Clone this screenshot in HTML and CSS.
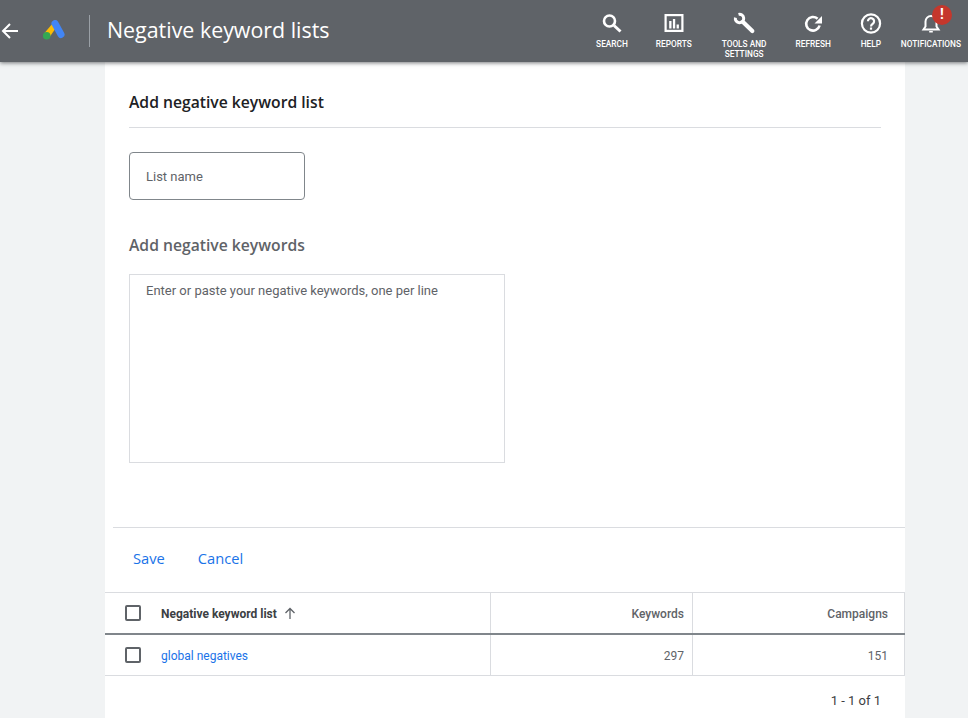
FILE: index.html
```html
<!DOCTYPE html>
<html lang="en">
<head>
  <meta charset="UTF-8">
  <title>Negative keyword lists</title>
  <link rel="stylesheet" href="styles.css">
</head>
<body>

  <header class="topbar">
    <svg class="back" width="20" height="20" viewBox="0 0 20 20"><path d="M18 10H3M10 3l-7 7 7 7" fill="none" stroke="#fff" stroke-width="2"/></svg>
    <svg class="logo" width="24" height="22" viewBox="0 0 24 22">
      <path d="M11 3 2.500 13 8 16.500 14.500 7z" fill="#fbbc04"/>
      <path d="M13 3.500 19 14.500" fill="none" stroke="#4285f4" stroke-width="7" stroke-linecap="round"/>
      <circle cx="4.700" cy="15.700" r="3.800" fill="#34a853"/>
    </svg>
    <div class="divider"></div>
    <h1>Negative keyword lists</h1>

    <nav class="actions">
      <div class="action search">
        <svg width="24" height="24" viewBox="0 0 24 24"><circle cx="9.500" cy="10" r="5.500" fill="none" stroke="#fff" stroke-width="2.600"/><path d="m14 14.500 6.500 6" stroke="#fff" stroke-width="3" fill="none"/></svg>
        <span>Search</span>
      </div>
      <div class="action reports">
        <svg width="24" height="24" viewBox="0 0 24 24"><rect x="3.600" y="4.100" width="16.800" height="15.800" fill="none" stroke="#fff" stroke-width="2.200"/><path d="M7.200 10h2.300v7.500H7.200zM10.900 8h2.300v9.500h-2.300zM14.600 13.500h2.300v4h-2.300z" fill="#fff"/></svg>
        <span>Reports</span>
      </div>
      <div class="action tools">
        <svg width="24" height="24" viewBox="0 0 24 24"><path d="M6.500 3.400a4.200 4.200 0 1 1-3.100 3.200" fill="none" stroke="#fff" stroke-width="3"/><path d="m11 11 9.300 9" fill="none" stroke="#fff" stroke-width="4.200" stroke-linecap="round"/></svg>
        <span>Tools and<br>settings</span>
      </div>
      <div class="action refresh">
        <svg width="24" height="24" viewBox="0 0 24 24"><path d="M18.600 14.500a6.800 6.800 0 1 1-2-6.700" fill="none" stroke="#fff" stroke-width="2.600"/><path d="M21 5v7.500h-7.500z" fill="#fff"/></svg>
        <span>Refresh</span>
      </div>
      <div class="action help">
        <svg width="24" height="24" viewBox="0 0 24 24"><circle cx="12" cy="12.500" r="9.100" fill="none" stroke="#fff" stroke-width="2.200"/><path d="M8.900 10.200a3.100 3.100 0 1 1 5 2.500c-1.300 1-1.900 1.500-1.900 2.800" fill="none" stroke="#fff" stroke-width="2.200"/><rect x="10.900" y="16.500" width="2.200" height="2.200" fill="#fff"/></svg>
        <span>Help</span>
      </div>
      <div class="action notifications">
        <svg width="24" height="24" viewBox="0 0 24 24"><path d="M12 5a5.500 5.500 0 0 0-5.500 5.500v5L4.500 18.500h15l-2-3v-5A5.500 5.500 0 0 0 12 5z" fill="none" stroke="#fff" stroke-width="2"/><path d="M10.200 20h3.600v1.500h-3.600z" fill="#fff"/></svg>
        <span>Notifications</span>
        <b class="badge">!</b>
      </div>
    </nav>
  </header>

  <main class="panel">
    <section class="form">
      <h2>Add negative keyword list</h2>
      <div class="name-box">List name</div>
      <h3>Add negative keywords</h3>
      <div class="keywords-box">Enter or paste your negative keywords, one per line</div>
    </section>

    <div class="buttons">
      <a>Save</a>
      <a>Cancel</a>
    </div>

    <div class="table">
      <div class="row head">
        <div class="cell first"><i class="check"></i><strong>Negative keyword list</strong>
          <svg width="14" height="14" viewBox="0 0 14 14"><path d="M7 13V2.500M2.500 7 7 2.500 11.500 7" fill="none" stroke="#5f6368" stroke-width="1.300"/></svg>
        </div>
        <div class="cell num">Keywords</div>
        <div class="cell num last">Campaigns</div>
      </div>
      <div class="row">
        <div class="cell first"><i class="check"></i><a>global negatives</a></div>
        <div class="cell num">297</div>
        <div class="cell num last">151</div>
      </div>
    </div>

    <div class="pager">1 - 1 of 1</div>
  </main>

</body>
</html>
```

FILE: styles.css
```css
* {
  box-sizing: border-box;
}
body {
  margin: 0;
  height: 718px;
  overflow: hidden;
  background-color: #f1f3f4;
  color: #3c4043;
  font-family: Roboto, sans-serif;
}
.topbar {
  position: relative;
  z-index: 2;
  display: flex;
  align-items: center;
  height: 62px;
  background-color: #5f6368;
  box-shadow: 0 1px 4px rgba(60, 64, 67, .7);
  color: #fff;
}
.back {
  flex: none;
}
.logo {
  flex: none;
  margin-left: 22px;
}
.divider {
  width: 1px;
  height: 32px;
  margin: 0 17px 0 23px;
  background-color: #9aa0a6;
}
h1 {
  margin: 0 0 4px;
  font-family: "Open Sans", sans-serif;
  font-size: 21.4px;
  font-weight: 400;
}
.actions {
  display: flex;
  margin-left: auto;
  height: 62px;
  padding-top: 11px;
  padding-right: 7px;
}
.action {
  position: relative;
  display: flex;
  flex-direction: column;
  align-items: center;
  font-size: 8.3px;
  font-weight: 500;
  line-height: 10px;
  text-transform: uppercase;
  text-align: center;
}
.action span {
  margin-top: 4px;
}
.search { margin-right: 28px; }
.reports { margin-right: 30px; }
.tools { margin-right: 29px; }
.refresh { margin-right: 28px; }
.help { margin-right: 18px; }
.badge {
  position: absolute;
  top: -6px;
  left: 31px;
  width: 20px;
  height: 20px;
  border-radius: 50%;
  background-color: #c5372c;
  font-size: 14px;
  line-height: 19px;
}
.panel {
  width: 800px;
  height: 656px;
  margin-left: 105px;
  background-color: #fff;
}
.form {
  margin-left: 8px;
  padding: 0 24px 64px 16px;
  border-bottom: 1px solid #dadce0;
}
h2 {
  margin: 0 0 24px;
  padding: 30px 0 14px;
  border-bottom: 1px solid #dadce0;
  color: #202124;
  font-family: "Open Sans", sans-serif;
  font-size: 15.7px;
  font-weight: 550;
  line-height: 21px;
}
.name-box {
  width: 176px;
  height: 48px;
  padding-left: 16px;
  border: 1px solid #80868b;
  border-radius: 4px;
  color: #5f6368;
  font-size: 13px;
  line-height: 47px;
}
h3 {
  margin: 35px 0 18px;
  color: #5f6368;
  font-family: "Open Sans", sans-serif;
  font-size: 15.7px;
  font-weight: 550;
  line-height: 21px;
}
.keywords-box {
  width: 376px;
  height: 189px;
  padding: 7px 16px;
  border: 1px solid #dadce0;
  color: #5f6368;
  font-size: 13px;
  line-height: 17px;
}
.buttons {
  display: flex;
  gap: 33px;
  height: 64px;
  padding-left: 28px;
  font-family: "Open Sans", sans-serif;
  font-size: 14.7px;
  font-weight: 500;
  line-height: 60px;
  color: #1a73e8;
}
.table {
  border-top: 1px solid #dadce0;
}
.row {
  display: grid;
  grid-template-columns: 386px 202px 212px;
  height: 41px;
  border-bottom: 1px solid #dadce0;
  font-size: 12px;
}
.row.head {
  height: 42px;
  border-bottom: 2px solid #80868b;
  font-weight: 500;
}
.cell {
  display: flex;
  align-items: center;
  padding-top: 2px;
  border-right: 1px solid #dadce0;
  color: #5f6368;
}
.first {
  padding-left: 20px;
}
.first a {
  color: #1a73e8;
}
.first svg {
  margin-bottom: 2px;
  margin-left: 6px;
}
strong {
  color: #3c4043;
  font-weight: 700;
}
.num {
  justify-content: flex-end;
  padding-right: 8px;
}
.last {
  padding-right: 16px;
}
.check {
  width: 16px;
  height: 16px;
  margin-right: 20px;
  margin-bottom: 2px;
  border: 2px solid #5f6368;
  border-radius: 2px;
}
.pager {
  padding: 17px 24px 0 0;
  color: #3c4043;
  font-size: 13px;
  line-height: 16px;
  text-align: right;
}
```
